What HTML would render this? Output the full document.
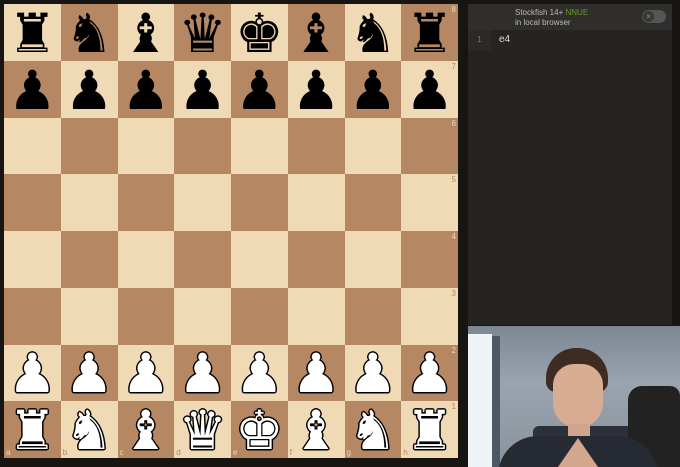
<!DOCTYPE html>
<html><head><meta charset="utf-8"><style>
*{margin:0;padding:0;box-sizing:border-box}
html,body{width:680px;height:467px;overflow:hidden}
body{background:#161512;position:relative;font-family:"Liberation Sans","DejaVu Sans",sans-serif}
#board{position:absolute;left:4px;top:4px;width:454px;height:454px;display:grid;grid-template-columns:repeat(8,1fr);grid-template-rows:repeat(8,1fr)}
.sq{position:relative;display:flex;align-items:center;justify-content:center;overflow:hidden}
.l{background:#f0d9b5}.d{background:#b58863}
.p{font-family:"DejaVu Sans",sans-serif;font-size:54px;line-height:1;margin-top:3px}
.b{color:#000}
.w{color:#fff;text-shadow:-1.5px 0 #000,1.5px 0 #000,0 -1.5px #000,0 1.5px #000,-1px -1px #000,1px 1px #000,-1px 1px #000,1px -1px #000}
.rk{position:absolute;right:2px;top:1px;font-size:8px}
.fl{position:absolute;left:2px;bottom:1px;font-size:8px}
.l .rk,.l .fl{color:#b58863}.d .rk,.d .fl{color:#f0d9b5}
#panel{position:absolute;left:468px;top:4px;width:204px;height:321px;background:#262421}
#hdr{height:26px;background:#302e2c;position:relative;font-size:8px;color:#bababa;padding:4px 0 0 47px;line-height:10px}
#hdr span{color:#629924}
#tog{position:absolute;right:6px;top:6px;width:24px;height:13px;border-radius:7px;background:#555}
#tog i{position:absolute;left:1px;top:1px;width:11px;height:11px;border-radius:50%;background:#3a3835;color:#999;font-size:8px;font-style:normal;text-align:center;line-height:11px}
#mv{height:20px;display:flex;font-size:10px}
#mv .n{width:23px;background:#2c2a27;color:#777;text-align:center;line-height:20px;font-size:8px}
#mv .m{padding-left:8px;color:#ddd;line-height:20px}
#cam{position:absolute;left:468px;top:326px;width:212px;height:141px;overflow:hidden;background:#8a939c}
</style></head><body>
<div id="board"></div>
<div id="panel"><div id="hdr">Stockfish 14+ <span>NNUE</span><br>in local browser<div id="tog"><i>×</i></div></div>
<div id="mv"><div class="n">1</div><div class="m">e4</div></div></div>
<div id="cam">
<div style="position:absolute;left:0;top:0;width:212px;height:141px;background:linear-gradient(180deg,#7d8794,#9aa4ae 40%,#8a939c)"></div>
<div style="position:absolute;left:0;top:8px;width:24px;height:133px;background:#eef3f6"></div>
<div style="position:absolute;left:24px;top:10px;width:8px;height:131px;background:#4b5866"></div>
<div style="position:absolute;left:65px;top:100px;width:110px;height:41px;background:#2d3038;border-radius:6px 6px 0 0"></div>
<div style="position:absolute;left:160px;top:60px;width:52px;height:81px;background:#222;border-radius:14px 10px 0 0"></div>
<div style="position:absolute;left:78px;top:22px;width:62px;height:44px;background:#3e2c22;border-radius:30px 30px 10px 10px"></div>
<div style="position:absolute;left:85px;top:38px;width:50px;height:64px;background:#d8ad94;border-radius:22px 22px 26px 26px"></div>
<div style="position:absolute;left:100px;top:98px;width:22px;height:14px;background:#cfa58d"></div>
<div style="position:absolute;left:30px;top:110px;width:160px;height:40px;background:#262a33;border-radius:40px 40px 0 0"></div>
<div style="position:absolute;left:90px;top:112px;width:40px;height:29px;background:#d4a68d;clip-path:polygon(50% 0,100% 100%,0 100%)"></div>
</div>
<script>
const back=['♜','♞','♝','♛','♚','♝','♞','♜'];
const files='abcdefgh';
let h='';
for(let r=0;r<8;r++)for(let c=0;c<8;c++){
const cls=(r+c)%2==0?'l':'d';let inner='';
if(r==0)inner='<span class="p b">'+back[c]+'</span>';
if(r==1)inner='<span class="p b">♟</span>';
if(r==6)inner='<span class="p w">♟</span>';
if(r==7)inner='<span class="p w">'+back[c]+'</span>';
if(c==7)inner+='<span class="rk">'+(8-r)+'</span>';
if(r==7)inner+='<span class="fl">'+files[c]+'</span>';
h+='<div class="sq '+cls+'">'+inner+'</div>';}
document.getElementById('board').innerHTML=h;
</script>
</body></html>
